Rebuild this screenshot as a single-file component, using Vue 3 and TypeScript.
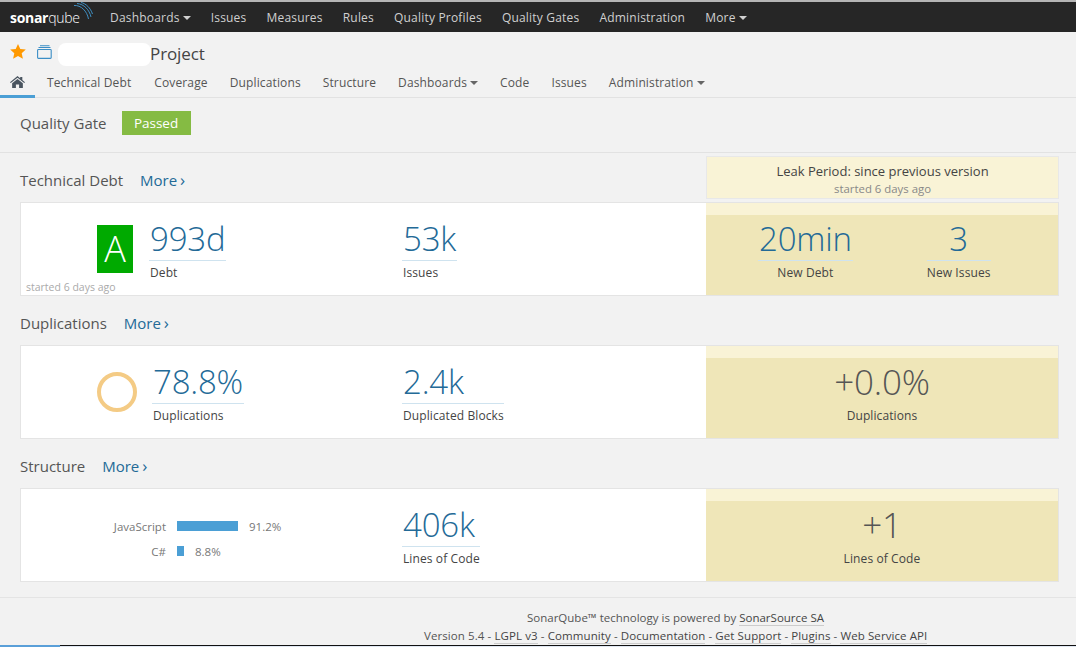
<script setup lang="ts">
const topNav = [
  { label: 'Dashboards', caret: true },
  { label: 'Issues' },
  { label: 'Measures' },
  { label: 'Rules' },
  { label: 'Quality Profiles' },
  { label: 'Quality Gates' },
  { label: 'Administration' },
  { label: 'More', caret: true },
]
const tabs = [
  { label: 'Technical Debt' },
  { label: 'Coverage' },
  { label: 'Duplications' },
  { label: 'Structure' },
  { label: 'Dashboards', caret: true },
  { label: 'Code' },
  { label: 'Issues' },
  { label: 'Administration', caret: true },
]
const langs = [
  { name: 'JavaScript', width: 61, pct: '91.2%' },
  { name: 'C#', width: 7, pct: '8.8%' },
]
const footerLinks = ['LGPL v3', 'Community', 'Documentation', 'Get Support', 'Plugins', 'Web Service API']
</script>

<template>
  <div class="page">
    <nav class="topbar">
      <a class="logo"><b>sonar</b>qube
        <svg class="waves" width="20" height="18" viewBox="0 0 20 18" fill="none" stroke="#3f8fc2" stroke-width="1">
          <path d="M1 3.500C8 3 14 9 15.500 17" />
          <path d="M4 1.500C11 2 16.500 8 18 15" />
          <path d="M8 .5C13 1.500 17.500 6 19.500 12" />
        </svg>
      </a>
      <a v-for="n in topNav" :key="n.label" class="topitem">{{ n.label }}<i v-if="n.caret" class="caret"></i></a>
    </nav>

    <header class="context">
      <div class="titleline">
        <svg class="star" width="16" height="15" viewBox="0 0 16 15"><path fill="#f90" d="M8 0l2.300 5 5.500.6-4.100 3.700 1.200 5.400L8 12l-4.900 2.700 1.200-5.400L.2 5.600 5.700 5z" /></svg>
        <svg class="qualifier" width="15" height="14" viewBox="0 0 15 14" fill="none" stroke="#3b8ec6" stroke-width="1.100">
          <rect x=".6" y="4.500" width="13.600" height="8.900" rx=".8" />
          <path d="M1.500 2.500h12M3 .7h9.500" />
        </svg>
        <span class="redacted"></span>
        <span class="project">Project</span>
      </div>
      <div class="tabs">
        <a class="tab home">
          <svg width="15" height="12" viewBox="0 0 14 12" preserveAspectRatio="none"><path fill="#4a5560" d="M7 0l2.500 2.200V1h2v3l2.500 2.200-.7.800L7 1.800.7 7 0 6.200zM2 7.300L7 3l5 4.300V12H8.500V8.500h-3V12H2z" /></svg>
        </a>
        <a v-for="t in tabs" :key="t.label" class="tab">{{ t.label }}<i v-if="t.caret" class="caret dark"></i></a>
      </div>
    </header>

    <div class="gate">
      <span class="gate-label">Quality Gate</span>
      <span class="gate-badge">Passed</span>
    </div>

    <section class="block first">
      <div class="head">
        <h2>Technical Debt</h2>
        <a class="more">More <span class="chev">›</span></a>
        <div class="leak-note">
          <div class="leak-title">Leak Period: since previous version</div>
          <div class="leak-sub">started 6 days ago</div>
        </div>
      </div>
      <div class="card">
        <div class="main">
          <div class="col-a debt-col">
            <div class="rating">A</div>
            <div class="metric"><div class="num">993d</div><div class="lab">Debt</div></div>
            <div class="started">started 6 days ago</div>
          </div>
          <div class="col-b">
            <div class="metric"><div class="num">53k</div><div class="lab">Issues</div></div>
          </div>
        </div>
        <div class="leak two">
          <div class="metric center"><div class="num">20min</div><div class="lab">New Debt</div></div>
          <div class="metric center"><div class="num">3</div><div class="lab">New Issues</div></div>
        </div>
      </div>
    </section>

    <section class="block">
      <div class="head">
        <h2>Duplications</h2>
        <a class="more">More <span class="chev">›</span></a>
      </div>
      <div class="card">
        <div class="main">
          <div class="col-a dup-col">
            <div class="ring"></div>
            <div class="metric"><div class="num">78.8%</div><div class="lab">Duplications</div></div>
          </div>
          <div class="col-b">
            <div class="metric"><div class="num">2.4k</div><div class="lab">Duplicated Blocks</div></div>
          </div>
        </div>
        <div class="leak">
          <div class="metric center plain"><div class="num">+0.0%</div><div class="lab">Duplications</div></div>
        </div>
      </div>
    </section>

    <section class="block">
      <div class="head">
        <h2>Structure</h2>
        <a class="more">More <span class="chev">›</span></a>
      </div>
      <div class="card">
        <div class="main">
          <div class="col-a langs">
            <div v-for="l in langs" :key="l.name" class="lang">
              <span class="lang-name">{{ l.name }}</span>
              <span class="bar" :style="{ width: l.width + 'px' }"></span>
              <span class="lang-pct">{{ l.pct }}</span>
            </div>
          </div>
          <div class="col-b">
            <div class="metric"><div class="num">406k</div><div class="lab">Lines of Code</div></div>
          </div>
        </div>
        <div class="leak">
          <div class="metric center plain"><div class="num">+1</div><div class="lab">Lines of Code</div></div>
        </div>
      </div>
    </section>

    <footer class="foot">
      <div class="foot-line">SonarQube™ technology is powered by <a>SonarSource SA</a></div>
      <div class="foot-line second">Version 5.4<template v-for="f in footerLinks" :key="f"> - <a>{{ f }}</a></template></div>
    </footer>
    <div class="taskbar"></div>
  </div>
</template>

<style>
html, body { margin: 0; background: #f2f2f2; overflow: hidden; }
</style>

<style scoped>
.page {
  width: 1076px;
  height: 647px;
  overflow: hidden;
  background: #f2f2f2;
  font-family: "Open Sans", "Noto Sans", sans-serif;
  font-size: 12px;
  color: #444;
  display: flex;
  flex-direction: column;
  border-top: 2px solid #b5b5b5;
  box-sizing: border-box;
}
.topbar {
  height: 30px;
  flex: none;
  background: #262626;
  display: flex;
  align-items: center;
  padding-left: 10px;
}
.logo {
  position: relative;
  width: 100px;
  color: #fff;
  font-size: 14px;
  font-weight: 300;
  letter-spacing: -0.3px;
}
.logo b { font-weight: 700; }
.waves { position: absolute; left: 63px; top: -6px; }
.topitem {
  color: #d0d0d0;
  font-size: 12px;
  letter-spacing: 0.2px;
  margin-right: 20px;
}
.caret {
  display: inline-block;
  margin-left: 3px;
  vertical-align: 2px;
  border-left: 4px solid transparent;
  border-right: 4px solid transparent;
  border-top: 4px solid #d0d0d0;
}
.caret.dark { border-top-color: #666; }
.context {
  height: 66px;
  flex: none;
  box-sizing: border-box;
  border-bottom: 1px solid #e2e2e2;
  padding-top: 9px;
  display: flex;
  flex-direction: column;
}
.titleline {
  height: 26px;
  display: flex;
  align-items: center;
  padding-left: 10px;
}
.star { margin-right: 11px; margin-top: -6px; }
.qualifier { margin-right: 6px; margin-top: -4px; }
.redacted {
  width: 93px;
  height: 23px;
  border-radius: 8px;
  background: #fff;
}
.project {
  font-size: 17px;
  color: #444;
  margin: -2px 0 0 -1px;
  letter-spacing: -0.1px;
}
.tabs {
  display: flex;
  height: 30px;
}
.tab {
  padding: 6px 11px 0;
  line-height: 20px;
  font-size: 12px;
  letter-spacing: 0.13px;
  color: #555;
  white-space: nowrap;
}
.tab:nth-child(2) { padding-right: 12px; }
.tab.home {
  box-sizing: border-box;
  width: 35px;
  margin-right: 1px;
  padding: 9px 0 0 10px;
  height: 31px;
  line-height: 12px;
  border-bottom: 3px solid #4b9fd5;
}
.gate {
  height: 55px;
  flex: none;
  box-sizing: border-box;
  border-bottom: 1px solid #e2e2e2;
  display: flex;
  align-items: flex-start;
  padding: 13px 0 0 20px;
}
.gate-label { font-size: 15px; color: #555; margin-right: 15px; line-height: 24px; }
.gate-badge {
  width: 69px;
  height: 24px;
  line-height: 25px;
  text-align: center;
  background: #85bb43;
  color: #fff;
  font-size: 13.500px;
}
.block { padding: 0 17px 0 20px; }
.head {
  height: 49px;
  box-sizing: border-box;
  padding-top: 5px;
  display: flex;
  align-items: center;
  gap: 17px;
  position: relative;
}
.head h2 {
  margin: 0;
  font-size: 15px;
  font-weight: 400;
  color: #555;
}
.more { font-size: 15px; color: #236a97; word-spacing: -1px; }
.chev { font-size: 17px; line-height: 1; }
.leak-note {
  position: absolute;
  right: 0;
  top: 3px;
  width: 353px;
  height: 43px;
  box-sizing: border-box;
  border: 1px solid #e8e8e8;
  background: #f9f3d6;
  text-align: center;
}
.leak-title { font-size: 13px; line-height: 17px; margin-top: 6px; color: #444; }
.leak-sub { font-size: 11.400px; line-height: 17px; color: #888; }
.card {
  height: 94px;
  box-sizing: border-box;
  border: 1px solid #e4e4e4;
  background: #fff;
  display: flex;
}
.main { flex: 1; display: flex; position: relative; }
.col-a {
  width: 381px;
  box-sizing: border-box;
  display: flex;
  align-items: flex-start;
  padding-top: 15px;
}
.col-b { padding-top: 15px; }
.debt-col { padding-left: 76px; }
.dup-col { padding-left: 76px; }
.rating {
  width: 36px;
  height: 48px;
  margin: 7px 16px 0 0;
  background: #00aa00;
  color: #fff;
  font-size: 36px;
  font-weight: 300;
  line-height: 48px;
  text-align: center;
}
.ring {
  width: 40px;
  height: 40px;
  box-sizing: border-box;
  margin: 11px 15px 0 0;
  border: 4px solid #f4cb85;
  border-radius: 50%;
}
.num {
  font-size: 33px;
  font-weight: 300;
  line-height: 42px;
  letter-spacing: -0.2px;
  color: #236a97;
  border-bottom: 1px solid #cfe3ef;
  padding: 0 1px;
}
.lab { font-size: 12px; line-height: 16px; margin-top: 4px; color: #444; letter-spacing: 0.1px; }
.metric { display: inline-block; }
.metric .lab { padding-left: 1px; }
.started {
  position: absolute;
  left: 5px;
  bottom: 1px;
  font-size: 10.500px;
  color: #aaa;
}
.langs {
  flex-direction: column;
  padding-top: 30px;
  gap: 11px;
}
.lang { display: flex; align-items: center; height: 14px; font-size: 11.500px; color: #777; }
.lang-name { width: 145px; text-align: right; margin-right: 11px; }
.bar { height: 10px; background: #4b9fd5; margin-right: 11px; }
.leak {
  width: 352px;
  flex: none;
  background: #efe6b8;
  border-top: 12px solid #f9f3d6;
  box-sizing: border-box;
  display: flex;
  justify-content: center;
  padding-top: 3px;
}
.leak.two { justify-content: flex-start; }
.leak.two .metric:first-child { margin-left: 52px; }
.leak.two .metric:last-child { margin-left: 74px; }
.center { text-align: center; }
.center .lab { padding-left: 0; }
.plain .num { color: #555; border-bottom: none; padding-bottom: 1px; font-size: 35px; }
.foot {
  margin-top: 15px;
  border-top: 1px solid #e4e4e4;
  padding: 11px 0 0 424px;
  font-size: 11.500px;
  color: #555;
  flex: 1;
  min-height: 0;
}
.foot-line { line-height: 18px; white-space: nowrap; }
.foot-line:first-child { padding-left: 103px; }
.foot-line.second { letter-spacing: 0.09px; }
.foot a { color: #444; border-bottom: 1px solid #ccc; }
.taskbar {
  flex: none;
  height: 2px;
  background: linear-gradient(90deg, #5a9fd8 60px, transparent 60px), linear-gradient(#111 1px, #dfe7f2 1px);
}
</style>
